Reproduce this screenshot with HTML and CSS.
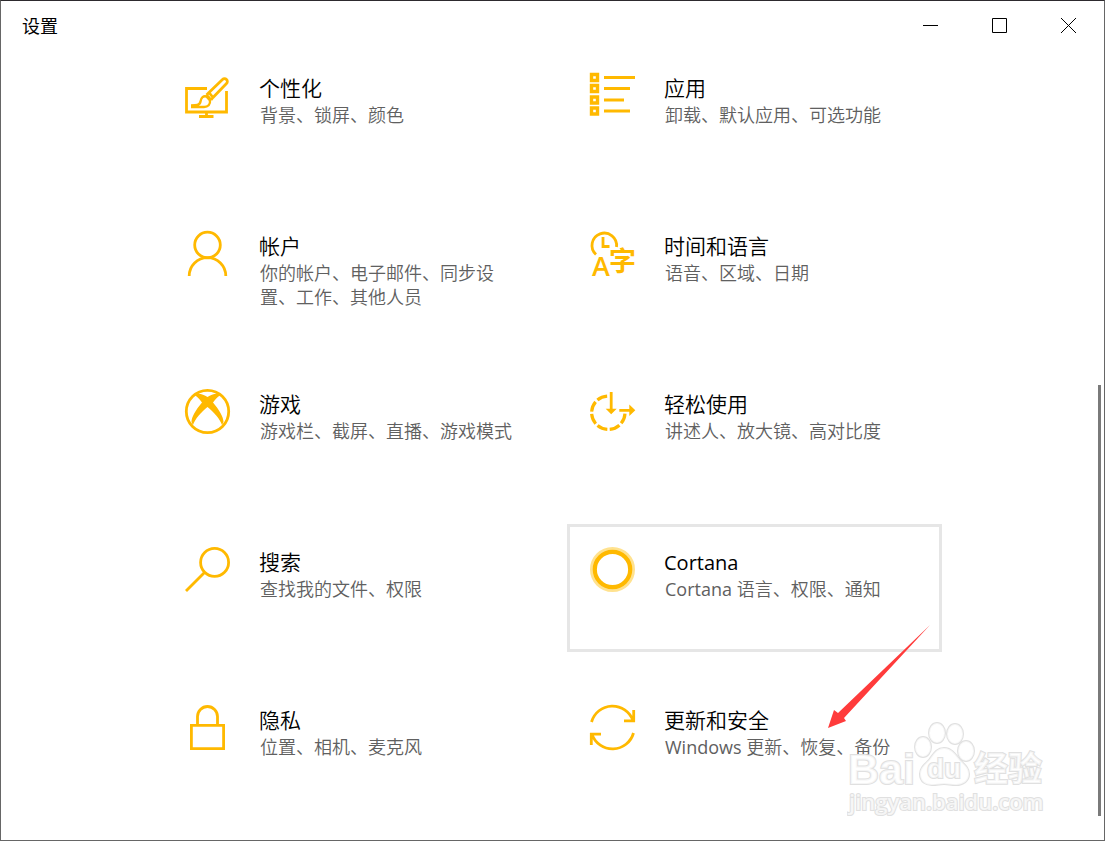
FILE: index.html
```html
<!DOCTYPE html>
<html lang="zh-CN">
<head>
    <meta charset="UTF-8">
    <meta name="viewport" content="width=device-width, initial-scale=1.0">
    <title>设置</title>
    <link rel="stylesheet" href="styles.css">
</head>
<body>

    <div class="window">
        <!-- Title bar -->
        <header class="title-bar">
            <h1 class="window-title">设置</h1>
            <div class="window-controls">
                <button class="window-btn" aria-label="最小化">
                    <svg width="15" height="15" viewBox="0 0 15 15"><path d="M0 7.5h15"/></svg>
                </button>
                <button class="window-btn" aria-label="最大化">
                    <svg width="15" height="15" viewBox="0 0 15 15"><path d="M.5.5h14v14H.5z"/></svg>
                </button>
                <button class="window-btn" aria-label="关闭">
                    <svg width="15" height="15" viewBox="0 0 15 15"><path d="M0 0l15 15M15 0L0 15"/></svg>
                </button>
            </div>
        </header>

        <!-- Categories -->
        <main class="content">
            <nav class="tiles">
                <a class="tile" href="#personalization">
                    <svg class="icon" viewBox="0 0 45 45">
                        <path d="M22 15.500H1.500V39H41.500V18"/>
                        <path d="M21.500 39v4.500M14 43.500h14.500"/>
                        <path d="M24 19.500L37.500 6.500a2.800 2.800 0 0 1 4 4L28 24.500M24 19.500l4 5M21.500 22l4.500 5M24 19.500l-2.500 2.500M28 24.500l-2 2.500" stroke-width="2.800"/>
                        <path d="M6 32.500c5 0 9 0 9.500-4 .5-4 3-6 6-5l3.500 4c.5 4-2 6.500-6 6.500H6" fill="#fff" stroke-width="2.400"/>
                    </svg>
                    <div class="tile-text">
                        <h2 class="tile-title">个性化</h2>
                        <p class="tile-desc">背景、锁屏、颜色</p>
                    </div>
                </a>
                <a class="tile" href="#apps">
                    <svg class="icon" viewBox="0 0 45 45">
                        <path d="M1.500 1.500h6v6h-6zM1.500 12.500h6v6h-6zM1.500 24h6v6h-6zM1.500 35h6v6h-6z" stroke-width="3.400"/>
                        <path d="M14 4.500h31M14 15.500h26M14 27h20M14 38h26"/>
                    </svg>
                    <div class="tile-text">
                        <h2 class="tile-title">应用</h2>
                        <p class="tile-desc">卸载、默认应用、可选功能</p>
                    </div>
                </a>
                <a class="tile" href="#accounts">
                    <svg class="icon" viewBox="0 0 45 45">
                        <circle cx="22.500" cy="14" r="12.800"/>
                        <path d="M4.200 45a18.300 18.300 0 0 1 36.600 0"/>
                    </svg>
                    <div class="tile-text">
                        <h2 class="tile-title">帐户</h2>
                        <p class="tile-desc">你的帐户、电子邮件、同步设置、工作、其他人员</p>
                    </div>
                </a>
                <a class="tile" href="#time">
                    <svg class="icon" viewBox="0 0 45 45">
                        <path d="M6 23.500A12.300 12.300 0 1 1 26.500 16"/>
                        <path d="M13 6v9.500h6.500"/>
                        <text class="icon-letter" x="2" y="45">A</text>
                        <text class="icon-hanzi" x="19" y="40">字</text>
                    </svg>
                    <div class="tile-text">
                        <h2 class="tile-title">时间和语言</h2>
                        <p class="tile-desc">语音、区域、日期</p>
                    </div>
                </a>
                <a class="tile" href="#gaming">
                    <svg class="icon" viewBox="0 0 45 45">
                        <circle cx="22.500" cy="22.500" r="21.200"/>
                        <path class="solid" d="M9 6c4-2.500 9-1 13.500 2C27 5 32 3.500 36 6c-2.500 1-5.500 4-8 7.500 6 7 10.500 14.500 10.500 19.500l-1.500 3c-2-6-8-12.500-14.500-18C16 23.500 10 30 8 36l-1.500-3c0-5 4.500-12.500 10.500-19.500C14.500 10 11.500 7 9 6z"/>
                    </svg>
                    <div class="tile-text">
                        <h2 class="tile-title">游戏</h2>
                        <p class="tile-desc">游戏栏、截屏、直播、游戏模式</p>
                    </div>
                </a>
                <a class="tile" href="#ease">
                    <svg class="icon" viewBox="0 0 45 45">
                        <path d="M18.300 7A16.700 16.700 0 1 0 35 23.700" stroke-width="3.200" stroke-dasharray="10.600 2.500" stroke-dashoffset="-1.200"/>
                        <path d="M21.200 3v18M29.300 21.300h11"/>
                        <path class="solid" d="M15.700 19.700h11L21.200 25.300zM39.300 15.600v11.400l6-5.700z"/>
                    </svg>
                    <div class="tile-text">
                        <h2 class="tile-title">轻松使用</h2>
                        <p class="tile-desc">讲述人、放大镜、高对比度</p>
                    </div>
                </a>
                <a class="tile" href="#search">
                    <svg class="icon" viewBox="0 0 45 45">
                        <circle cx="29.600" cy="15.400" r="14"/>
                        <path d="M19.500 25.500L1 44"/>
                    </svg>
                    <div class="tile-text">
                        <h2 class="tile-title">搜索</h2>
                        <p class="tile-desc">查找我的文件、权限</p>
                    </div>
                </a>
                <a class="tile tile-hover" href="#cortana">
                    <svg class="icon" viewBox="0 0 45 45">
                        <circle class="halo" cx="22.500" cy="22.500" r="20.500"/>
                        <circle cx="22.500" cy="22.500" r="17.700" stroke-width="4.200"/>
                    </svg>
                    <div class="tile-text">
                        <h2 class="tile-title"><span class="latin">Cortana</span></h2>
                        <p class="tile-desc"><span class="latin">Cortana </span>语言、权限、通知</p>
                    </div>
                </a>
                <a class="tile" href="#privacy">
                    <svg class="icon" viewBox="0 0 45 45">
                        <path d="M6.400 20.400h32.200v23.200H6.400z"/>
                        <path d="M12.500 20v-8.500a10 10 0 0 1 20 0V20"/>
                    </svg>
                    <div class="tile-text">
                        <h2 class="tile-title">隐私</h2>
                        <p class="tile-desc">位置、相机、麦克风</p>
                    </div>
                </a>
                <a class="tile" href="#update">
                    <svg class="icon" viewBox="0 0 45 45">
                        <path d="M1.500 17A21.800 21.800 0 0 1 43 15.500M43.700 5v10.800H34"/>
                        <path d="M43.500 28A21.800 21.800 0 0 1 2 29.500M1.300 40V29.200H11"/>
                    </svg>
                    <div class="tile-text">
                        <h2 class="tile-title">更新和安全</h2>
                        <p class="tile-desc"><span class="latin">Windows </span>更新、恢复、备份</p>
                    </div>
                    <svg class="pointer" width="102" height="104" viewBox="0 0 102 104">
                        <path d="M0 103L6 85L10 88L102 0L16 93L18 96z"/>
                    </svg>
                </a>
            </nav>
            <div class="scrollbar"></div>
        </main>

        <!-- Watermark -->
        <svg class="watermark" width="210" height="100" viewBox="0 0 210 100">
            <text class="mark-name" x="1" y="64">Bai</text>
            <ellipse cx="76" cy="27" rx="8" ry="10"/>
            <ellipse cx="90" cy="13" rx="8" ry="10"/>
            <ellipse cx="108" cy="14" rx="8" ry="10"/>
            <ellipse cx="119" cy="31" rx="8" ry="10"/>
            <path d="M97 28c-8 0-11 7-15 12-5 5-9 8-9 14 0 8 6 11 12 11 5 0 8-1 12-1s7 1 12 1c7 0 13-4 13-11 0-6-4-9-9-14-4-5-8-12-16-12z"/>
            <text class="mark-du" x="80" y="58">du</text>
            <text class="mark-hanzi" x="127" y="61">经验</text>
            <text class="mark-url" x="2" y="90">jingyan.baidu.com</text>
        </svg>
    </div>

</body>
</html>
```
FILE: styles.css
```css
* {
    box-sizing: border-box;
}

body {
    margin: 0;
    background-color: #fff;
    color: #000;
    font-family: "Open Sans", "Noto Sans CJK SC", sans-serif;
    font-size: 18px;
}

h1, h2, p {
    margin: 0;
    font-weight: 350;
}

.window {
    position: relative;
    display: flex;
    flex-direction: column;
    min-height: 100vh;
    border: 1px solid #666;
    border-top-color: #2d2a2e;
}

/* Title bar */
.title-bar {
    display: flex;
    justify-content: space-between;
    align-items: center;
    height: 49px;
    padding: 0 1px 0 21px;
}

.window-title {
    font-size: 18px;
    font-weight: 400;
    line-height: 24px;
}

.window-controls {
    display: flex;
    height: 100%;
}

.window-btn {
    display: flex;
    align-items: center;
    justify-content: center;
    width: 69px;
    padding: 0;
    border: none;
    background: none;
}

.window-btn svg {
    fill: none;
    stroke: #000;
}

/* Categories */
.content {
    flex: 1;
    display: flex;
}

.tiles {
    flex: 1;
    display: grid;
    grid-template-columns: repeat(auto-fit, 375px);
    grid-auto-rows: 128px;
    gap: 30px;
    justify-content: center;
    padding: 0 120px;
}

.tile {
    position: relative;
    display: flex;
    gap: 29px;
    padding: 20px;
    border: 3px solid transparent;
    color: inherit;
    text-decoration: none;
}

.tile-hover {
    border-color: #e6e6e6;
}

.icon {
    flex: none;
    width: 45px;
    height: 45px;
    overflow: visible;
    fill: none;
    stroke: #ffb900;
    stroke-width: 2.8;
}

.icon .solid {
    fill: #ffb900;
    stroke: none;
}

.icon .halo {
    stroke: #ffe28f;
    stroke-width: 4;
}

.icon text {
    fill: #ffb900;
    stroke: none;
}

.icon-letter {
    font-size: 27px;
    font-weight: 600;
}

.icon-hanzi {
    font-family: "Noto Sans CJK SC", sans-serif;
    font-size: 27px;
    font-weight: 700;
}

.tile-text {
    flex: 1;
    padding-top: 1px;
}

.tile-title {
    margin-bottom: 1px;
    font-size: 21px;
    line-height: 28px;
}

.tile-desc {
    max-width: 256px;
    padding-left: 1px;
    color: #606060;
    font-size: 18px;
    line-height: 24px;
}

.latin {
    font-weight: 400;
    line-height: 1;
}

.tile-title .latin {
    font-size: 20px;
}

.pointer {
    position: absolute;
    left: 258px;
    top: -60px;
    fill: #ff3b3b;
}

.scrollbar {
    align-self: flex-end;
    width: 3px;
    height: 431px;
    margin: 0 3px 24px -5px;
    background-color: #7a7a7a;
}

/* Watermark */
.watermark {
    position: absolute;
    right: 47px;
    bottom: 20px;
    fill: #fff;
    fill-opacity: 0.7;
    stroke: #e0e0e0;
    stroke-width: 2;
    paint-order: stroke;
    pointer-events: none;
}

.mark-name {
    font: 700 43px "Liberation Sans", sans-serif;
}

.mark-du {
    font: 700 28px "Liberation Sans", sans-serif;
}

.mark-hanzi {
    font: 700 34px "Noto Sans CJK SC", sans-serif;
}

.mark-url {
    font: 600 22px "Open Sans", sans-serif;
}
```
